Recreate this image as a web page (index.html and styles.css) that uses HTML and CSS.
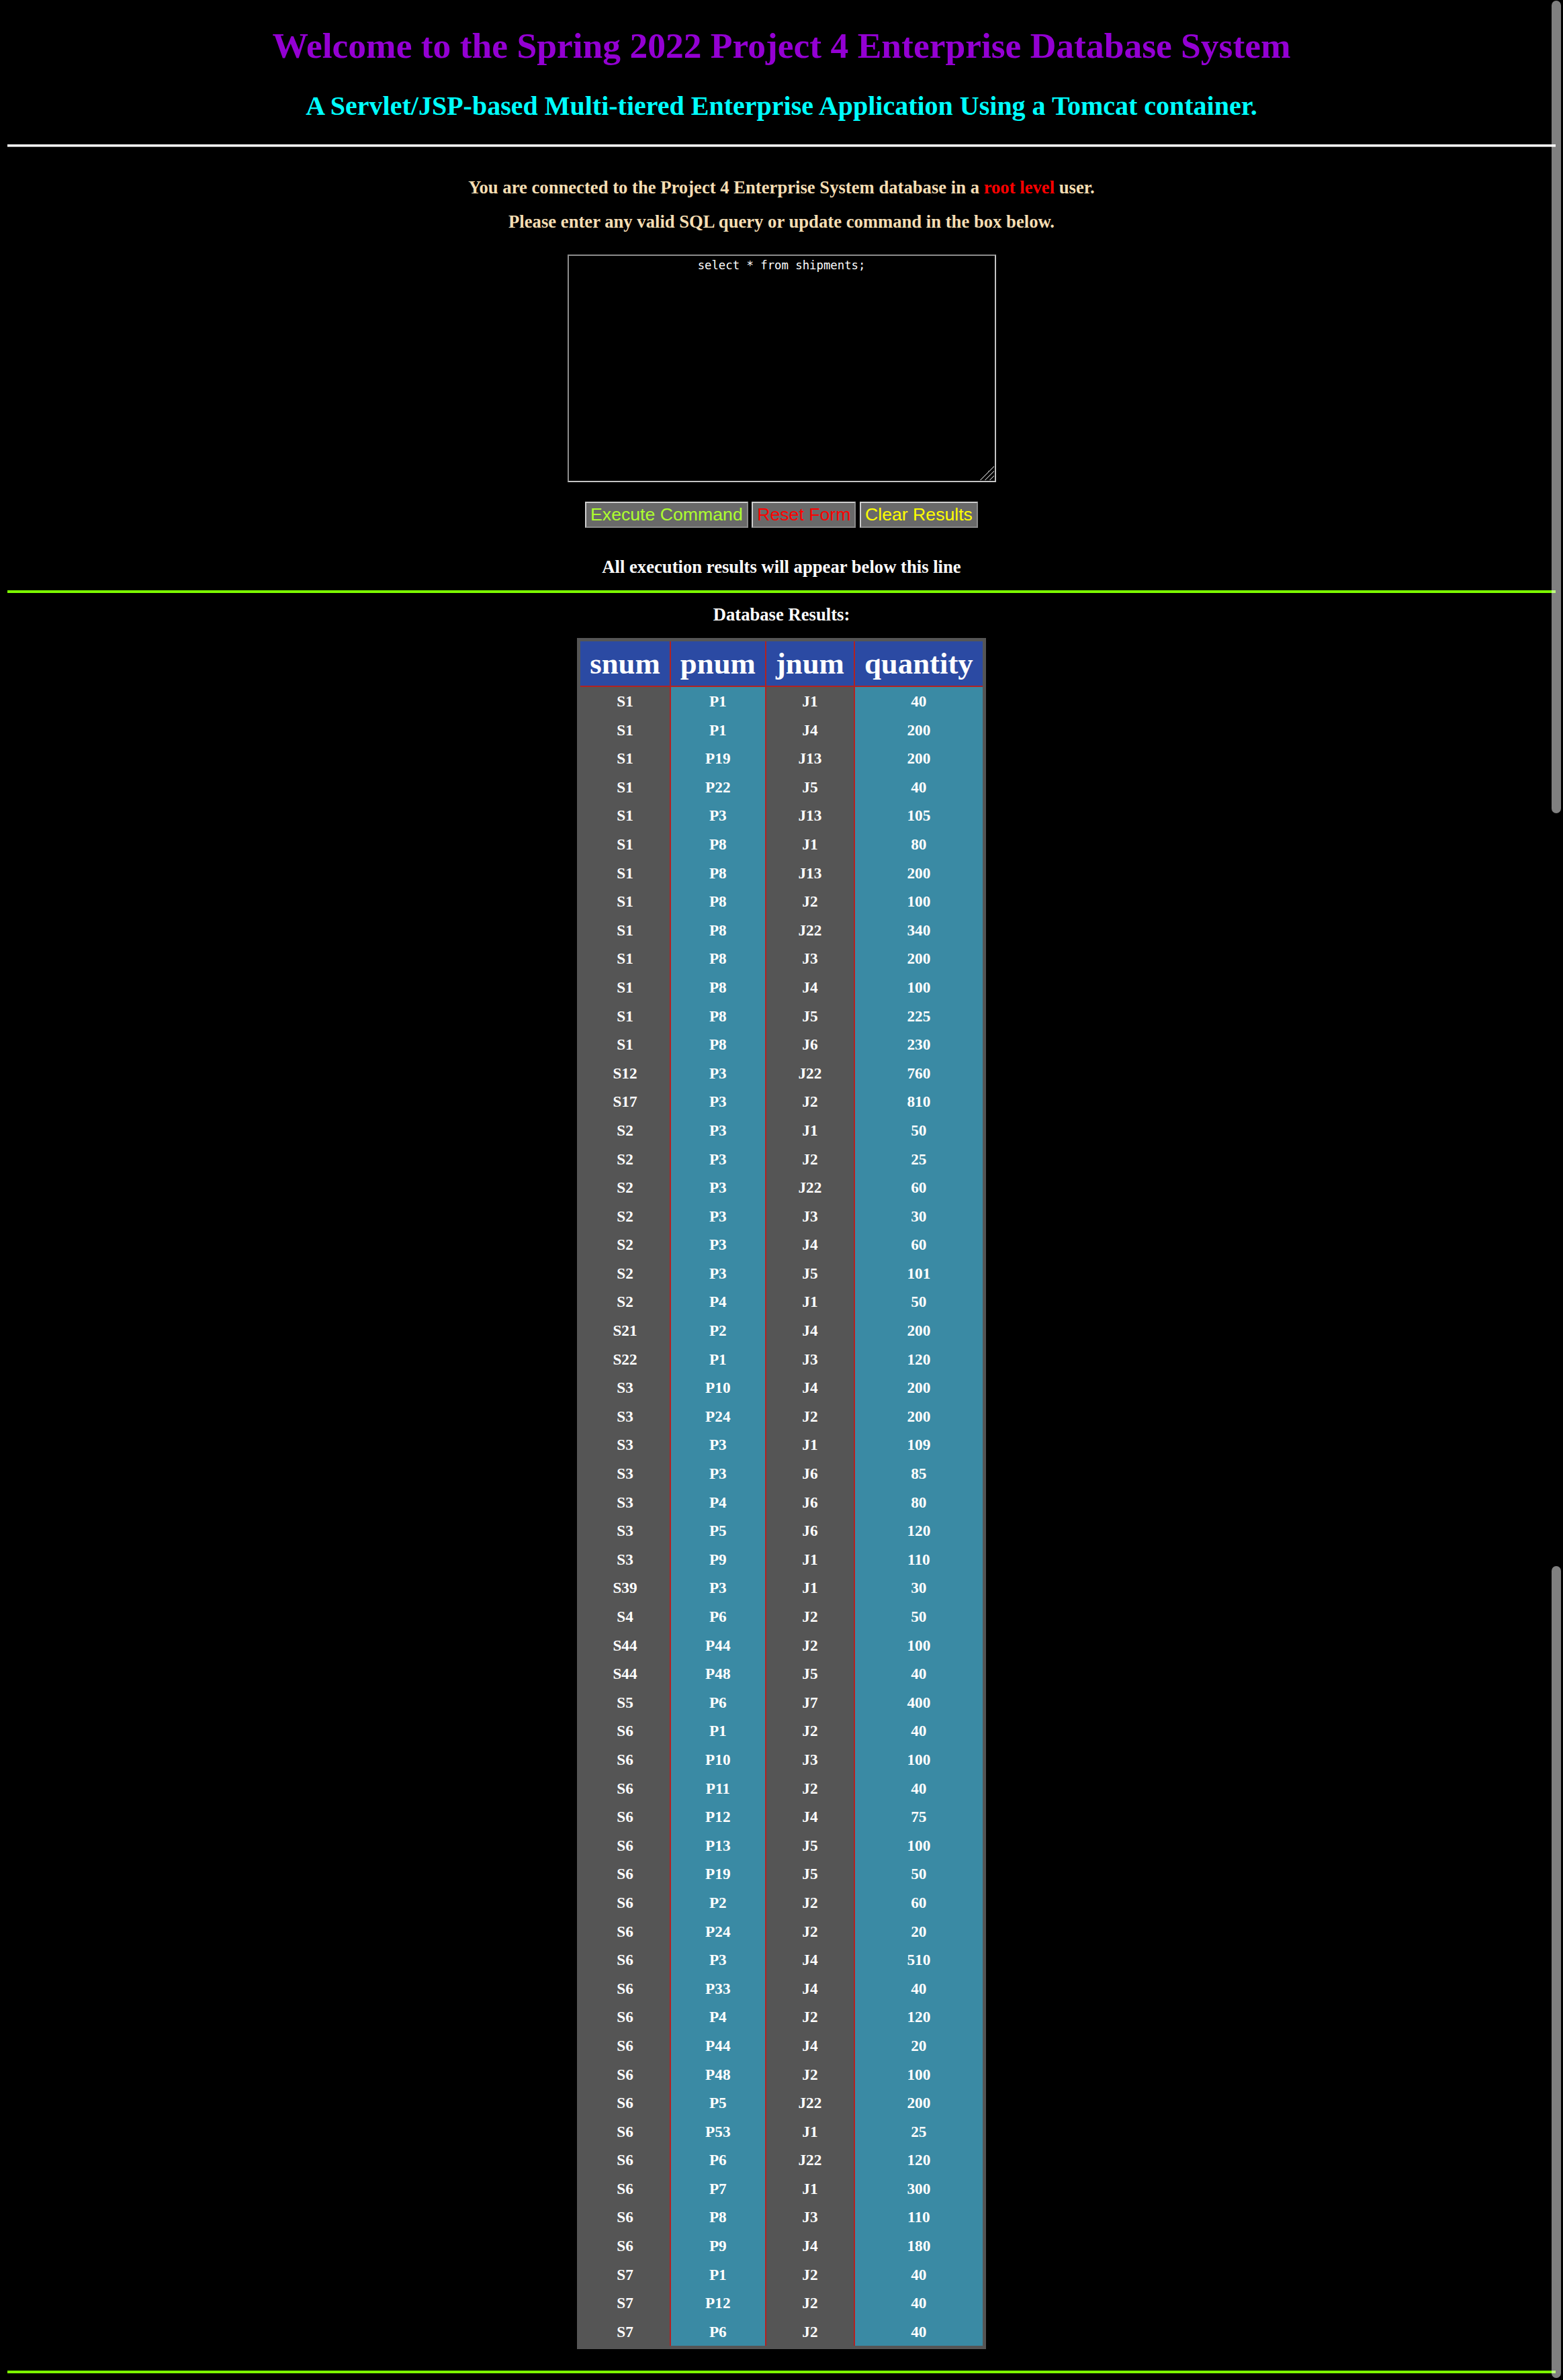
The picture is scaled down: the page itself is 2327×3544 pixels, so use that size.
FILE: index.html
```html
<!DOCTYPE html>
<html lang="en">
<head>
<meta charset="utf-8">
<title>Project 4 Enterprise Database System</title>
<link rel="stylesheet" href="styles.css">
</head>
<body>
<header class="top">
  <h1 class="title">Welcome to the Spring 2022 Project 4 Enterprise Database System</h1>
  <h2 class="subtitle">A Servlet/JSP-based Multi-tiered Enterprise Application Using a Tomcat container.</h2>
</header>
<hr class="rule-white">
<section class="intro">
  <p class="info info-first">You are connected to the Project 4 Enterprise System database in a <span class="root">root level</span> user.</p>
  <p class="info info-second">Please enter any valid SQL query or update command in the box below.</p>
  <form class="sql-form">
    <textarea class="sql-box" spellcheck="false">select * from shipments;</textarea>
    <div class="buttons">
      <button type="button" class="btn btn-exec">Execute Command</button>
      <button type="button" class="btn btn-reset">Reset Form</button>
      <button type="button" class="btn btn-clear">Clear Results</button>
    </div>
  </form>
  <p class="notice">All execution results will appear below this line</p>
</section>
<hr class="rule-green">
<section class="results">
  <p class="results-title">Database Results:</p>
  <table class="results-table">
    <thead>
      <tr><th>snum</th><th>pnum</th><th>jnum</th><th>quantity</th></tr>
    </thead>
    <tbody>
      <tr><td>S1</td><td>P1</td><td>J1</td><td>40</td></tr>
      <tr><td>S1</td><td>P1</td><td>J4</td><td>200</td></tr>
      <tr><td>S1</td><td>P19</td><td>J13</td><td>200</td></tr>
      <tr><td>S1</td><td>P22</td><td>J5</td><td>40</td></tr>
      <tr><td>S1</td><td>P3</td><td>J13</td><td>105</td></tr>
      <tr><td>S1</td><td>P8</td><td>J1</td><td>80</td></tr>
      <tr><td>S1</td><td>P8</td><td>J13</td><td>200</td></tr>
      <tr><td>S1</td><td>P8</td><td>J2</td><td>100</td></tr>
      <tr><td>S1</td><td>P8</td><td>J22</td><td>340</td></tr>
      <tr><td>S1</td><td>P8</td><td>J3</td><td>200</td></tr>
      <tr><td>S1</td><td>P8</td><td>J4</td><td>100</td></tr>
      <tr><td>S1</td><td>P8</td><td>J5</td><td>225</td></tr>
      <tr><td>S1</td><td>P8</td><td>J6</td><td>230</td></tr>
      <tr><td>S12</td><td>P3</td><td>J22</td><td>760</td></tr>
      <tr><td>S17</td><td>P3</td><td>J2</td><td>810</td></tr>
      <tr><td>S2</td><td>P3</td><td>J1</td><td>50</td></tr>
      <tr><td>S2</td><td>P3</td><td>J2</td><td>25</td></tr>
      <tr><td>S2</td><td>P3</td><td>J22</td><td>60</td></tr>
      <tr><td>S2</td><td>P3</td><td>J3</td><td>30</td></tr>
      <tr><td>S2</td><td>P3</td><td>J4</td><td>60</td></tr>
      <tr><td>S2</td><td>P3</td><td>J5</td><td>101</td></tr>
      <tr><td>S2</td><td>P4</td><td>J1</td><td>50</td></tr>
      <tr><td>S21</td><td>P2</td><td>J4</td><td>200</td></tr>
      <tr><td>S22</td><td>P1</td><td>J3</td><td>120</td></tr>
      <tr><td>S3</td><td>P10</td><td>J4</td><td>200</td></tr>
      <tr><td>S3</td><td>P24</td><td>J2</td><td>200</td></tr>
      <tr><td>S3</td><td>P3</td><td>J1</td><td>109</td></tr>
      <tr><td>S3</td><td>P3</td><td>J6</td><td>85</td></tr>
      <tr><td>S3</td><td>P4</td><td>J6</td><td>80</td></tr>
      <tr><td>S3</td><td>P5</td><td>J6</td><td>120</td></tr>
      <tr><td>S3</td><td>P9</td><td>J1</td><td>110</td></tr>
      <tr><td>S39</td><td>P3</td><td>J1</td><td>30</td></tr>
      <tr><td>S4</td><td>P6</td><td>J2</td><td>50</td></tr>
      <tr><td>S44</td><td>P44</td><td>J2</td><td>100</td></tr>
      <tr><td>S44</td><td>P48</td><td>J5</td><td>40</td></tr>
      <tr><td>S5</td><td>P6</td><td>J7</td><td>400</td></tr>
      <tr><td>S6</td><td>P1</td><td>J2</td><td>40</td></tr>
      <tr><td>S6</td><td>P10</td><td>J3</td><td>100</td></tr>
      <tr><td>S6</td><td>P11</td><td>J2</td><td>40</td></tr>
      <tr><td>S6</td><td>P12</td><td>J4</td><td>75</td></tr>
      <tr><td>S6</td><td>P13</td><td>J5</td><td>100</td></tr>
      <tr><td>S6</td><td>P19</td><td>J5</td><td>50</td></tr>
      <tr><td>S6</td><td>P2</td><td>J2</td><td>60</td></tr>
      <tr><td>S6</td><td>P24</td><td>J2</td><td>20</td></tr>
      <tr><td>S6</td><td>P3</td><td>J4</td><td>510</td></tr>
      <tr><td>S6</td><td>P33</td><td>J4</td><td>40</td></tr>
      <tr><td>S6</td><td>P4</td><td>J2</td><td>120</td></tr>
      <tr><td>S6</td><td>P44</td><td>J4</td><td>20</td></tr>
      <tr><td>S6</td><td>P48</td><td>J2</td><td>100</td></tr>
      <tr><td>S6</td><td>P5</td><td>J22</td><td>200</td></tr>
      <tr><td>S6</td><td>P53</td><td>J1</td><td>25</td></tr>
      <tr><td>S6</td><td>P6</td><td>J22</td><td>120</td></tr>
      <tr><td>S6</td><td>P7</td><td>J1</td><td>300</td></tr>
      <tr><td>S6</td><td>P8</td><td>J3</td><td>110</td></tr>
      <tr><td>S6</td><td>P9</td><td>J4</td><td>180</td></tr>
      <tr><td>S7</td><td>P1</td><td>J2</td><td>40</td></tr>
      <tr><td>S7</td><td>P12</td><td>J2</td><td>40</td></tr>
      <tr><td>S7</td><td>P6</td><td>J2</td><td>40</td></tr>
    </tbody>
  </table>
</section>
<hr class="rule-green rule-bottom">
<div class="scroll-thumb thumb-upper"></div>
<div class="scroll-thumb thumb-lower"></div>
</body>
</html>
```

FILE: styles.css
```css
html {
  background: #000;
}

body {
  margin: 0 11px 10px;
  background: #000;
  color: #fff;
  font-family: "Liberation Serif", "Times New Roman", serif;
  font-weight: bold;
}

.title {
  margin: 38px 0 0;
  font-size: 53.5px;
  line-height: 60px;
  text-align: center;
  color: #9400d3;
}

.subtitle {
  margin: 36.5px 0 0;
  font-size: 40px;
  line-height: 46px;
  text-align: center;
  color: #00ffff;
}

.rule-white {
  margin: 34.5px 0 0;
  height: 0;
  border: 0;
  border-top: 3px solid #fff;
  border-bottom: 1px solid #9a9a9a;
}

.intro {
  text-align: center;
}

.info {
  margin: 45px 0 0;
  font-size: 26.67px;
  line-height: 30px;
  color: #f5deb3;
}

.info-second {
  margin-top: 21px;
}

.root {
  color: #ff0000;
}

.sql-form {
  margin: 0;
}

.sql-box {
  display: block;
  box-sizing: border-box;
  width: 638px;
  height: 339px;
  margin: 34px auto 0;
  padding: 4px 4px 0;
  background-color: #000;
  background-image: linear-gradient(135deg, transparent 0 50%, #8a8a8a 50% 55%, transparent 55% 66%, #8a8a8a 66% 71%, transparent 71% 82%, #8a8a8a 82% 87%, transparent 87%);
  background-size: 22px 22px;
  background-position: right 1px bottom 1px;
  background-repeat: no-repeat;
  color: #fff;
  border: 2px solid;
  border-color: #8c8c8c #c4c4c4 #c4c4c4 #8c8c8c;
  font-family: "DejaVu Sans Mono", "Liberation Mono", monospace;
  font-size: 17.3px;
  font-weight: normal;
  text-align: center;
  outline: none;
  resize: none;
}

.buttons {
  display: flex;
  justify-content: center;
  gap: 5.5px;
  margin-top: 29px;
}

.btn {
  margin: 0;
  padding: 2px 6px;
  background: #696969;
  border: 2px solid;
  border-color: #cfcfcf #8a8a8a #8a8a8a #cfcfcf;
  border-radius: 0;
  font-family: "Liberation Sans", Arial, sans-serif;
  font-size: 26.67px;
  font-weight: normal;
  line-height: 31px;
}

.btn-exec {
  color: #adff2f;
}

.btn-reset {
  color: #ff0000;
}

.btn-clear {
  color: #ffff00;
}

.notice {
  margin: 43px 0 0;
  font-size: 26.67px;
  line-height: 30px;
  color: #fff;
}

.rule-green {
  margin: 20px 0 0;
  height: 4px;
  border: 0;
  background: #7cfc00;
}

.results {
  text-align: center;
}

.results-title {
  margin: 17px 0 0;
  font-size: 26.67px;
  line-height: 30px;
  color: #fff;
}

.results-table {
  margin: 20px auto 0;
  border-collapse: separate;
  border-spacing: 0;
  border: 5px solid #555;
  color: #fff;
}

.results-table th {
  padding: 0 14px;
  background: #2b4aa3;
  font-size: 44.8px;
  line-height: 66px;
  border-bottom: 2px solid #b22222;
}

.results-table td {
  padding: 0 14px;
  font-size: 23.3px;
  line-height: 42.59px;
}

.results-table th + th,
.results-table td + td {
  border-left: 2px solid #b22222;
}

.results-table td:nth-child(odd) {
  background: #555;
}

.results-table td:nth-child(even) {
  background: #3a8aa4;
}

.rule-bottom {
  margin-top: 32px;
}

.scroll-thumb {
  position: absolute;
  left: 2310px;
  width: 14px;
  border-radius: 7px;
  background: rgba(255, 255, 255, 0.5);
}

.thumb-upper {
  top: 1px;
  height: 1210px;
}

.thumb-lower {
  top: 2332px;
  height: 1209px;
}
```
